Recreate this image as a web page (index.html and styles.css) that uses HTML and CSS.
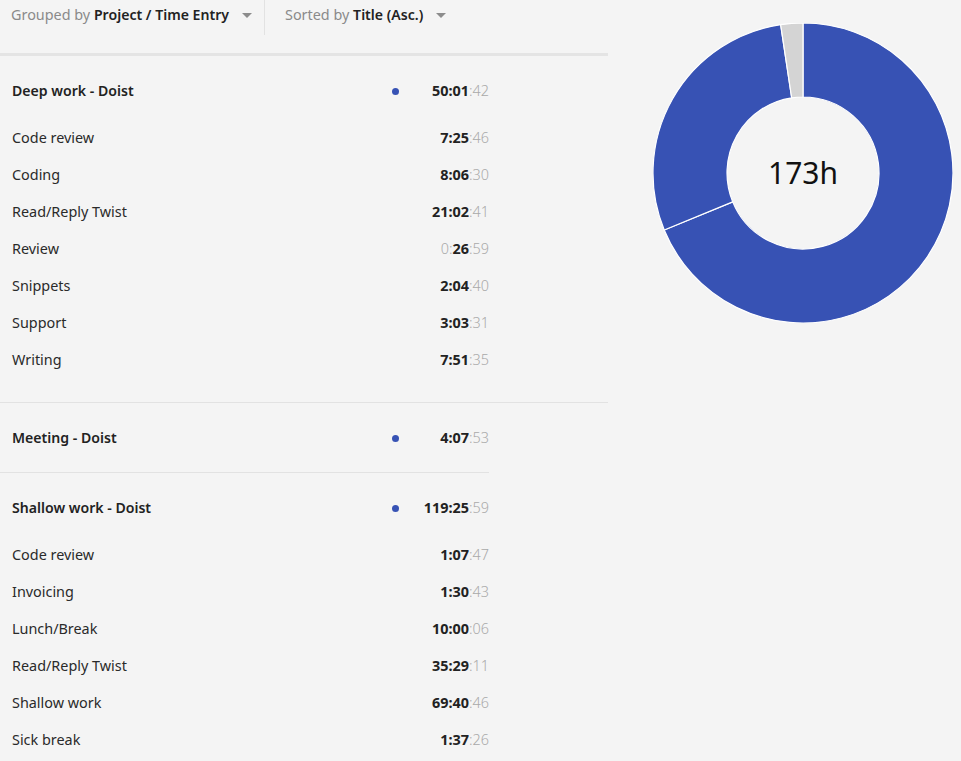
FILE: index.html
```html
<!DOCTYPE html>
<html lang="en">
<head>
<meta charset="utf-8">
<title>Time report</title>
<link rel="stylesheet" href="styles.css">
</head>
<body>
<div class="page">
  <div class="left">
    <div class="toolbar">
      <div class="tool tool-group">
        <span class="muted">Grouped by</span>&nbsp;<span class="strong">Project / Time Entry</span>
        <span class="caret"></span>
      </div>
      <div class="tool tool-sort">
        <span class="muted">Sorted by</span>&nbsp;<span class="strong">Title (Asc.)</span>
        <span class="caret"></span>
      </div>
    </div>
    <div class="top-line"></div>

    <section class="group sep-full">
      <div class="row head">
        <span class="name">Deep work - Doist</span>
        <span class="dot"></span>
        <span class="time"><b>50:01</b><i>:42</i></span>
      </div>
      <div class="children">
        <div class="row"><span class="name">Code review</span><span></span><span class="time"><b>7:25</b><i>:46</i></span></div>
        <div class="row"><span class="name">Coding</span><span></span><span class="time"><b>8:06</b><i>:30</i></span></div>
        <div class="row"><span class="name">Read/Reply Twist</span><span></span><span class="time"><b>21:02</b><i>:41</i></span></div>
        <div class="row"><span class="name">Review</span><span></span><span class="time"><i>0:</i><b>26</b><i>:59</i></span></div>
        <div class="row"><span class="name">Snippets</span><span></span><span class="time"><b>2:04</b><i>:40</i></span></div>
        <div class="row"><span class="name">Support</span><span></span><span class="time"><b>3:03</b><i>:31</i></span></div>
        <div class="row"><span class="name">Writing</span><span></span><span class="time"><b>7:51</b><i>:35</i></span></div>
      </div>
    </section>

    <section class="group sep-short">
      <div class="row head">
        <span class="name">Meeting - Doist</span>
        <span class="dot"></span>
        <span class="time"><b>4:07</b><i>:53</i></span>
      </div>
    </section>

    <section class="group">
      <div class="row head">
        <span class="name">Shallow work - Doist</span>
        <span class="dot"></span>
        <span class="time"><b>119:25</b><i>:59</i></span>
      </div>
      <div class="children">
        <div class="row"><span class="name">Code review</span><span></span><span class="time"><b>1:07</b><i>:47</i></span></div>
        <div class="row"><span class="name">Invoicing</span><span></span><span class="time"><b>1:30</b><i>:43</i></span></div>
        <div class="row"><span class="name">Lunch/Break</span><span></span><span class="time"><b>10:00</b><i>:06</i></span></div>
        <div class="row"><span class="name">Read/Reply Twist</span><span></span><span class="time"><b>35:29</b><i>:11</i></span></div>
        <div class="row"><span class="name">Shallow work</span><span></span><span class="time"><b>69:40</b><i>:46</i></span></div>
        <div class="row"><span class="name">Sick break</span><span></span><span class="time"><b>1:37</b><i>:26</i></span></div>
      </div>
    </section>
  </div>

  <div class="right">
    <div class="chart">
      <svg width="300" height="300" viewBox="0 0 300 300">
        <path class="seg blue" d="M150,0 A150,150 0 1 1 11.23,206.97 L79.69,178.86 A76,76 0 1 0 150,74 Z"/>
        <path class="seg blue" d="M11.23,206.97 A150,150 0 0 1 127.65,1.68 L138.68,74.85 A76,76 0 0 0 79.69,178.86 Z"/>
        <path class="seg grey" d="M127.65,1.68 A150,150 0 0 1 150,0 L150,74 A76,76 0 0 0 138.68,74.85 Z"/>
      </svg>
      <div class="total">173h</div>
    </div>
  </div>
</div>
</body>
</html>
```

FILE: styles.css
```css
* { box-sizing: border-box; }

html, body {
  margin: 0;
  padding: 0;
  background: #f4f4f4;
}

body {
  font-family: "Noto Sans", "Open Sans", "Liberation Sans", sans-serif;
  font-size: 14.4px;
  color: #222;
  width: 961px;
  height: 761px;
  overflow: hidden;
}

.page {
  display: flex;
  align-items: flex-start;
}

.left {
  width: 608px;
  flex: none;
}

/* toolbar */
.toolbar {
  display: flex;
  height: 35px;
}

.tool {
  display: flex;
  align-items: center;
  height: 35px;
  padding-bottom: 5px;
  line-height: 20px;
  white-space: nowrap;
}

.tool-group {
  padding-left: 11px;
  padding-right: 12px;
  border-right: 1px solid #e2e2e2;
}

.tool-sort {
  padding-left: 20px;
}

.muted { color: #8a8a8a; }
.strong { color: #222; font-weight: 600; font-size: 14.1px; }

.caret {
  width: 0;
  height: 0;
  margin-left: 13px;
  border-left: 5px solid transparent;
  border-right: 5px solid transparent;
  border-top: 5px solid #8c8c8c;
}

.top-line {
  margin-top: 18px;
  height: 3px;
  background: #e4e4e4;
}

/* groups */
.group {
  padding-bottom: 7px;
}

.sep-full { border-bottom: 1px solid #e2e2e2; }
.sep-short {
  border-bottom: 1px solid #e2e2e2;
  width: 489px;
}

.row {
  display: grid;
  grid-template-columns: 1fr 7px 80px;
  column-gap: 10px;
  align-items: center;
  width: 489px;
  padding-left: 12px;
  padding-top: 2px;
  height: 37px;
  line-height: 20px;
}

.row.head {
  height: 62px;
  padding-top: 25px;
  align-items: start;
}

.head .name {
  font-weight: 600;
  font-size: 14.1px;
  color: #222;
}

.head .dot {
  margin-top: 7px;
}

.dot {
  width: 7px;
  height: 7px;
  border-radius: 50%;
  background: #3752b4;
}

.children {
  padding-bottom: 18px;
}

.name {
  color: #2a2a2a;
}

.time {
  text-align: right;
  white-space: nowrap;
}

.time b {
  font-weight: 700;
  color: #222;
}

.time i {
  font-style: normal;
  font-weight: 300;
  color: #a9a9a9;
}

/* chart */
.right {
  flex: 1;
  padding-left: 45px;
  padding-top: 23px;
}

.chart {
  position: relative;
  width: 300px;
  height: 300px;
}

.chart svg {
  display: block;
}

.seg {
  stroke: #ffffff;
  stroke-width: 1.2;
  stroke-linejoin: round;
}

.blue { fill: #3752b4; }
.grey { fill: #d4d4d4; }

.total {
  position: absolute;
  left: 0;
  top: 0;
  width: 300px;
  height: 300px;
  display: flex;
  align-items: center;
  justify-content: center;
  padding-bottom: 2px;
  font-size: 30px;
  color: #111;
  font-weight: 400;
}
```
